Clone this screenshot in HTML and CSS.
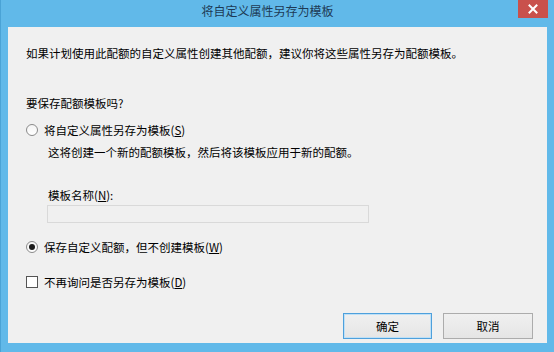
FILE: index.html
```html
<!DOCTYPE html>
<html lang="zh-CN">
<head>
  <meta charset="UTF-8" />
  <title>将自定义属性另存为模板</title>
  <link rel="stylesheet" href="styles.css">
</head>
<body>
  <div class="window">
    <div class="titlebar">
      <div class="title">将自定义属性另存为模板</div>
      <div class="close">
        <svg width="10" height="10" viewBox="0 0 10 10">
          <path d="M1.5 1.5 L8.5 8.5 M8.5 1.5 L1.5 8.5" stroke="#fff" stroke-width="2" stroke-linecap="square"/>
        </svg>
      </div>
    </div>

    <div class="content">
      <p class="intro">如果计划使用此配额的自定义属性创建其他配额，建议你将这些属性另存为配额模板。</p>
      <p class="question">要保存配额模板吗?</p>

      <div class="option opt-template">
        <span class="radio"></span>
        <span>将自定义属性另存为模板(<u>S</u>)</span>
      </div>
      <p class="hint">这将创建一个新的配额模板，然后将该模板应用于新的配额。</p>

      <p class="field-label">模板名称(<u>N</u>):</p>
      <div class="textbox"></div>

      <div class="option opt-save">
        <span class="radio checked"></span>
        <span>保存自定义配额，但不创建模板(<u>W</u>)</span>
      </div>

      <div class="option opt-ask">
        <span class="checkbox"></span>
        <span>不再询问是否另存为模板(<u>D</u>)</span>
      </div>

      <div class="buttons">
        <button class="btn default">确定</button>
        <button class="btn">取消</button>
      </div>
    </div>
  </div>
</body>
</html>
```

FILE: styles.css
```css
body {
  margin: 0;
  background: #61b9e9;
  font-family: "Noto Sans CJK SC", "Noto Sans", sans-serif;
  color: #000;
}

.window {
  width: 554px;
  height: 352px;
  display: flex;
  flex-direction: column;
  background: #61b9e9;
  border-left: 1px solid #4aa3d6;
  box-sizing: border-box;
}

.titlebar {
  position: relative;
  height: 27px;
  flex-shrink: 0;
}

.title {
  padding-right: 20px;
  text-align: center;
  font-size: 12px;
  line-height: 22px;
  color: #1d3a55;
}

.close {
  position: absolute;
  top: 0;
  right: 6px;
  width: 30px;
  height: 18px;
  background: #c9514c;
  display: flex;
  align-items: center;
  justify-content: center;
}

.content {
  flex: 1;
  margin: 0 7px 9px 7px;
  padding: 18px 14px 0 18px;
  background: #f0f0f0;
  font-size: 11.5px;
  line-height: 16px;
  display: flex;
  flex-direction: column;
  align-items: flex-start;
}

.content p {
  margin: 0;
}

.question {
  margin-top: 34px !important;
}

.option {
  display: flex;
  align-items: center;
  gap: 6px;
  height: 16px;
}

.opt-template {
  margin-top: 11px;
}

.hint {
  margin: 6px 0 0 22px !important;
}

.field-label {
  margin: 27px 0 0 22px !important;
}

.textbox {
  margin: 2px 0 0 21px;
  width: 322px;
  height: 18px;
  box-sizing: border-box;
  border: 1px solid #d9d9d9;
  background: #f0f0f0;
}

.opt-save {
  margin-top: 16px;
}

.opt-ask {
  margin-top: 19px;
}

.radio {
  width: 12px;
  height: 12px;
  box-sizing: border-box;
  border: 1px solid #8a8a8a;
  border-radius: 50%;
  background: linear-gradient(#f4f4f4, #ffffff);
  display: flex;
  align-items: center;
  justify-content: center;
}

.radio.checked::after {
  content: "";
  width: 6px;
  height: 6px;
  border-radius: 50%;
  background: #1a1a1a;
}

.checkbox {
  width: 12px;
  height: 12px;
  box-sizing: border-box;
  border: 1px solid #555;
  background: #fff;
}

.buttons {
  align-self: flex-end;
  margin-top: 23px;
  display: flex;
  gap: 11px;
}

.btn {
  width: 90px;
  height: 26px;
  font-family: inherit;
  font-size: 11.5px;
  color: #000;
  border: 1px solid #acacac;
  background: linear-gradient(#f0f0f0, #e5e5e5);
  padding: 0;
}

.btn.default {
  width: 89px;
  border-color: #4ea0dc;
  box-shadow: inset 0 0 0 1px #bfe0f6;
}
```
